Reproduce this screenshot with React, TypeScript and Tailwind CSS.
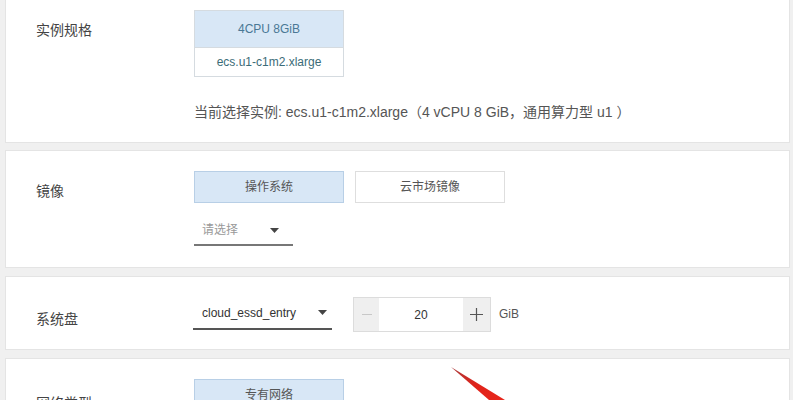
import React from "react";

const font = { fontFamily: '"Liberation Sans","Noto Sans CJK SC",sans-serif' };

function Caret() {
  return (
    <svg width="9" height="5" viewBox="0 0 9 5" className="shrink-0">
      <path d="M0 0 L9 0 L4.5 5 Z" fill="#444" />
    </svg>
  );
}

export default function App() {
  return (
    <div
      className="relative w-[793px] h-[400px] overflow-hidden bg-[#f0f0f0] pl-[5px] pr-[3px] flex flex-col"
      style={font}
    >
      {/* Card 1 */}
      <div className="h-[143px] shrink-0 bg-white border border-t-0 border-[#e4e4e4] flex pl-[30px]">
        <div className="w-[158px] shrink-0 pt-[20px] text-[14px] leading-[20px] text-[#444]">实例规格</div>
        <div className="flex flex-col pt-[10px]">
          <div className="w-[150px] border border-[#d5dbe0] flex flex-col">
            <div className="h-[37px] bg-[#d8e7f6] border-b border-[#d5dbe0] flex items-center justify-center text-[12px] text-[#4a7895]">
              4CPU 8GiB
            </div>
            <div className="h-[28px] bg-white flex items-center justify-center text-[12px] text-[#3b6c78]">
              ecs.u1-c1m2.xlarge
            </div>
          </div>
          <div className="mt-[25px] text-[14px] leading-[20px] text-[#555] whitespace-nowrap">
            当前选择实例: ecs.u1-c1m2.xlarge（4 vCPU 8 GiB，通用算力型 u1 ）
          </div>
        </div>
      </div>

      {/* Card 2 */}
      <div className="mt-[7px] h-[118px] shrink-0 bg-white border border-[#e4e4e4] flex pl-[30px]">
        <div className="w-[158px] shrink-0 pt-[30px] text-[14px] leading-[20px] text-[#444]">镜像</div>
        <div className="flex flex-col pt-[20px]">
          <div className="flex gap-[11px]">
            <div className="w-[150px] h-[32px] bg-[#d8e7f6] border border-[#b8cfe6] flex items-center justify-center text-[12px] text-[#555]">
              操作系统
            </div>
            <div className="w-[150px] h-[32px] bg-white border border-[#dedede] flex items-center justify-center text-[12px] text-[#555]">
              云市场镜像
            </div>
          </div>
          <div className="mt-[13px] w-[99px] h-[30px] border-b-[2px] border-[#777] flex items-center justify-between pl-[8px] pr-[14px] text-[12px] text-[#999]">
            <span>请选择</span>
            <Caret />
          </div>
        </div>
      </div>

      {/* Card 3 */}
      <div className="mt-[8px] h-[74px] shrink-0 bg-white border border-[#e4e4e4] flex pl-[30px]">
        <div className="w-[157px] shrink-0 pt-[32px] text-[14px] leading-[20px] text-[#444]">系统盘</div>
        <div className="flex items-start pt-[20px]">
          <div className="w-[139px] h-[33px] border-b-[2px] border-[#555] flex items-center justify-between pl-[9px] pr-[5px] text-[12px] text-[#333]">
            <span>cloud_essd_entry</span>
            <Caret />
          </div>
          <div className="ml-[21px] h-[35px] w-[138px] border border-[#dcdcdc] flex">
            <div className="w-[25px] bg-[#efefef] flex items-center justify-center">
              <div className="w-[10px] h-[1px] bg-[#c8c8c8]" />
            </div>
            <div className="flex-1 bg-white flex items-center justify-center text-[12px] text-[#333]">20</div>
            <div className="w-[27px] bg-[#efefef] flex items-center justify-center">
              <svg width="13" height="13" viewBox="0 0 13 13">
                <path d="M6.5 0 V13 M0 6.5 H13" stroke="#555" strokeWidth="1.2" />
              </svg>
            </div>
          </div>
          <div className="ml-[8px] h-[33px] flex items-center text-[12px] text-[#555]">GiB</div>
        </div>
      </div>

      {/* Card 4 */}
      <div className="mt-[8px] flex-1 bg-white border border-b-0 border-[#e4e4e4] flex pl-[30px]">
        <div className="w-[158px] shrink-0 pt-[34px] text-[14px] leading-[20px] text-[#444]">网络类型</div>
        <div className="pt-[20px]">
          <div className="w-[150px] h-[32px] bg-[#d8e7f6] border border-[#b8cfe6] flex items-center justify-center text-[12px] text-[#555]">
            专有网络
          </div>
        </div>
      </div>

      {/* red arrow overlay */}
      <svg className="absolute left-0 top-0 pointer-events-none" width="793" height="400" viewBox="0 0 793 400">
        <defs>
          <linearGradient id="ar" x1="0" y1="0" x2="1" y2="1">
            <stop offset="0" stopColor="#a83a3a" />
            <stop offset="0.5" stopColor="#e0231a" />
            <stop offset="1" stopColor="#e8261c" />
          </linearGradient>
        </defs>
        <polygon points="451,367 505,400 489,400" fill="url(#ar)" />
      </svg>
    </div>
  );
}
